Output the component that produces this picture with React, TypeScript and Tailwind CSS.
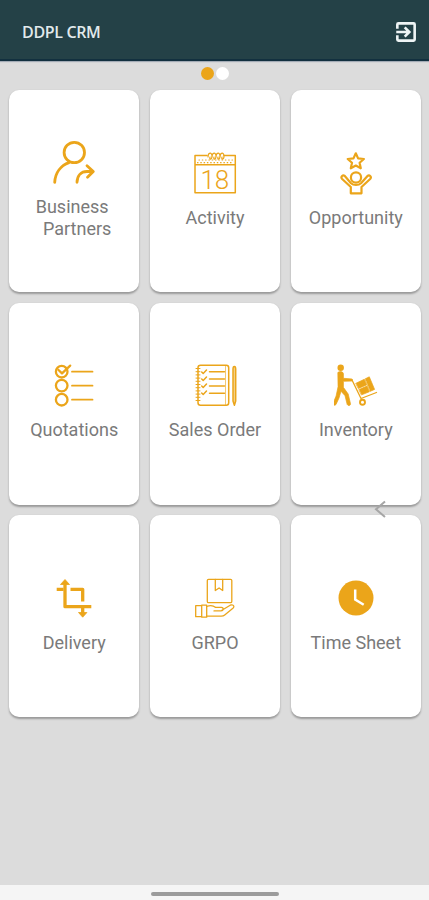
import type { ReactNode } from 'react';

interface Tile {
  id: string;
  label: ReactNode;
  icon: ReactNode;
}

const AMBER = '#eba51a';

function Icon({ width = 2, children }: { width?: number; children: ReactNode }) {
  return (
    <svg
      viewBox="0 0 44 44"
      className="h-11 w-11 shrink-0"
      fill="none"
      stroke={AMBER}
      strokeWidth={width}
      strokeLinecap="round"
      strokeLinejoin="round"
      aria-hidden="true"
    >
      {children}
    </svg>
  );
}

const ExitIcon = () => (
  <svg
    viewBox="0 0 24 24"
    className="h-[26px] w-[26px]"
    fill="none"
    stroke="#eef4f5"
    strokeWidth="2.4"
    strokeLinejoin="round"
    aria-hidden="true"
  >
    <path d="M4 9V5a1 1 0 0 1 1-1h14a1 1 0 0 1 1 1v14a1 1 0 0 1-1 1H5a1 1 0 0 1-1-1v-4" />
    <path d="M3 12h12M10.8 7.700 15.100 12l-4.300 4.300" strokeLinejoin="miter" />
  </svg>
);

const PartnersIcon = () => (
  <Icon width={2.8}>
    <circle cx="22.3" cy="12.5" r="10.2" />
    <path d="M2.7 42.3C3.3 32.5 9 25.5 17 22.6M25 42.3c.2-6.6 4-10.8 10-10.8h6M35 25.7l6.3 5.8-5.8 5.8" />
  </Icon>
);

const ActivityIcon = () => (
  <Icon width={1.5}>
    <path d="M14 4.5H2v37.3h40.3V4.5H31M2 13.8h40.3" />
    <path
      d="M15 6c0-5 4-5 4-1s-3 4-2 1M19 6c0-5 4-5 4-1s-3 4-2 1M23 6c0-5 4-5 4-1s-3 4-2 1M27 6c0-5 4-5 4-1s-3 4-2 1"
      strokeWidth="1.2"
    />
    <path d="M4.5 11.7h36M6 9h34" strokeWidth="1.2" strokeDasharray=".5 2.8" />
    <text
      x="21.8"
      y="37.5"
      textAnchor="middle"
      fontSize="26"
      fill={AMBER}
      stroke="none"
      className="font-['Roboto',sans-serif] font-light"
    >
      18
    </text>
  </Icon>
);

const OpportunityIcon = () => (
  <Icon width={2.2}>
    <path d="m21.8 2.3 2.3 5.1 5.8.6-4.3 3.8 1.2 5.5-5-2.8-5 2.8 1.2-5.5L13.7 8l5.8-.6z" />
    <circle cx="22" cy="26.5" r="5.1" />
    <path d="M17 32.2 10.8 25c-2-1.5-4.3.7-2.9 2.7l8.9 8.3v6.3h10.7V36l8.9-8.3c1.4-2-.9-4.2-2.9-2.7L27 32.2c-2.6 2.4-7.4 2.4-10 0z" />
  </Icon>
);

const QuotationsIcon = () => (
  <Icon width={2.3}>
    <circle cx="9.7" cy="8.7" r="5.8" />
    <circle cx="9.7" cy="22.6" r="5.8" />
    <circle cx="9.7" cy="36.7" r="5.8" />
    <path d="m6.5 7 3.5 3.4 8.2-7.8" />
    <path d="M20 8.7h20.5M20 22.7h20.5M20 36.7h20.5" strokeWidth="1.8" />
  </Icon>
);

const SalesOrderIcon = () => (
  <Icon width={1.5}>
    <rect x="5" y="2.3" width="30.7" height="40" rx="2.5" />
    <path d="M32.5 3v38.5" strokeWidth=".6" />
    <path
      d="M3 5.5h4M3 8.7h4M3 11.9h4M3 15.1h4M3 18.3h4M3 21.5h4M3 24.7h4M3 27.9h4M3 31.1h4M3 34.3h4M3 37.5h4"
      strokeWidth="1"
    />
    <path d="m8.7 9 1.5 1.5L13.5 7M8.7 16l1.5 1.5 3.3-3.5M8.7 23l1.5 1.5 3.3-3.5M8.7 30l1.5 1.5 3.3-3.5" />
    <path d="M16.5 8.7h15M16.5 16h15M16.5 23h15M16.5 30.3h15" />
    <path d="M40 6c0-3.5 2.7-3.5 2.7 0v32l-1.3 4.3L40 38z" fill={AMBER} fillOpacity=".5" />
  </Icon>
);

const InventoryIcon = () => (
  <Icon width={1}>
    <circle cx="6.7" cy="4.7" r="3.2" fill={AMBER} stroke="none" />
    <path
      d="M4 9.3c1.5-1.3 5-.8 5.4 1.2v4.8l8.2.6c1.3.2 1.3 2 0 2.2l-8.2.2v6l4.8 6.7 2.3 9.8c.1 2-2.5 2.4-3.3.7l-2.2-8.8-4-4.5-2 6.8-3 6.5c-1 1.5-3.5.7-2.9-1.3l3-7.2L4 24z"
      fill={AMBER}
      strokeWidth=".7"
    />
    <path d="m18 17 9 18.5 15.5-6" strokeWidth="1.3" />
    <path
      d="m22 20.2 8.3-3.9 2.3 5.6-8 3.5zM31.3 15.8l4-2 5.3 12.6-4.3 1.9zM25.1 26.5l7.9-3.5 2.3 5.8-7.6 3z"
      fill={AMBER}
      strokeWidth=".7"
    />
    <circle cx="28.5" cy="39.2" r="2.5" strokeWidth="1.9" />
  </Icon>
);

const DeliveryIcon = () => (
  <Icon width={3.3}>
    <g strokeLinecap="butt">
      <path d="M13 7v23.7h26.3M4.7 13.3h6.5M18.5 13.3h12.2v12.2M30.7 31v7" />
      <path d="m13 3.5 4.5 5h-9zM26.5 36.5h8.4l-4.2 4.7z" fill={AMBER} strokeWidth=".8" />
    </g>
  </Icon>
);

const GrpoIcon = () => (
  <Icon width={1.3}>
    <rect x="14.3" y="3.3" width="24.5" height="23.3" rx="1.2" />
    <path d="M22.3 3.3v11.2l3.8-2.5 3.6 2.5V3.3" />
    <path d="M2.7 29.7h6v11h-6zM8.7 29.2h5v12h-5z" />
    <path d="M13.7 30.5c4-1.5 6.5-1 9 .9h5.6c2.7.3 2.5 3.3-.3 3.5h-7M28.5 34.5l8.7-5.3c2.5-1.2 4.8.8 3 2.7l-8.5 7.2c-1 .9-2 1.1-3.5 1.1H13.7" />
  </Icon>
);

const TimeSheetIcon = () => (
  <Icon>
    <circle cx="22" cy="22" r="17.5" fill={AMBER} stroke="none" />
    <path
      d="M21.2 13.5v10l8.5 5.2"
      stroke="white"
      strokeWidth="2.5"
      strokeLinecap="butt"
      strokeLinejoin="miter"
    />
  </Icon>
);

const tiles: Tile[] = [
  {
    id: 'partners',
    label: (
      <>
        <span className="block pr-1">Business</span>
        <span className="block pl-1.5">Partners</span>
      </>
    ),
    icon: <PartnersIcon />,
  },
  { id: 'activity', label: 'Activity', icon: <ActivityIcon /> },
  { id: 'opportunity', label: 'Opportunity', icon: <OpportunityIcon /> },
  { id: 'quotations', label: 'Quotations', icon: <QuotationsIcon /> },
  { id: 'sales-order', label: 'Sales Order', icon: <SalesOrderIcon /> },
  { id: 'inventory', label: 'Inventory', icon: <InventoryIcon /> },
  { id: 'delivery', label: 'Delivery', icon: <DeliveryIcon /> },
  { id: 'grpo', label: 'GRPO', icon: <GrpoIcon /> },
  { id: 'time-sheet', label: 'Time Sheet', icon: <TimeSheetIcon /> },
];

export default function App() {
  return (
    <div className="relative flex h-[900px] w-[429px] flex-col overflow-hidden bg-[#dcdcdc] font-['Roboto',sans-serif]">
      <header className="flex h-[61px] shrink-0 items-center justify-between border-b-2 border-[#12303f] bg-[#244147] pt-[5px] pr-2.5 pl-[22px] shadow-[0_1px_1px_#a3abb5]">
        <h1 className="font-['Open_Sans',sans-serif] text-base font-semibold tracking-[-0.35px] text-[#e2eaec]">
          DDPL CRM
        </h1>
        <button type="button" aria-label="Log out">
          <ExitIcon />
        </button>
      </header>

      <div className="flex h-[29px] shrink-0 items-start justify-center gap-[2px] pt-1.5">
        <span className="h-[13px] w-[13px] rounded-full bg-[#eba51a]" />
        <span className="h-[13px] w-[13px] rounded-full bg-white" />
      </div>

      <main className="grid grid-cols-3 gap-[10.5px] pr-2 pl-[9px]">
        {tiles.map((tile) => (
          <button
            key={tile.id}
            type="button"
            className="flex h-[202px] flex-col items-center justify-center rounded-[10px] bg-white pb-[3px] shadow-[0_1.5px_2px_rgba(0,0,0,0.3)]"
          >
            {tile.icon}
            <span className="mt-3 text-center text-lg leading-[21.5px] whitespace-nowrap text-[#7a7a7a]">
              {tile.label}
            </span>
          </button>
        ))}
      </main>

      <svg
        viewBox="0 0 12 18"
        className="absolute top-[500px] left-[374px] h-[18px] w-3"
        fill="none"
        stroke="#a6a6a6"
        strokeWidth="2"
        aria-hidden="true"
      >
        <path d="M11 1.5 2 9.2l9 7.7" />
      </svg>

      <footer className="mt-auto flex h-[15px] shrink-0 items-center justify-center bg-[#f5f5f5] pt-0.5">
        <span className="h-1 w-32 rounded-full bg-[#9b9b9b]" />
      </footer>
    </div>
  );
}
